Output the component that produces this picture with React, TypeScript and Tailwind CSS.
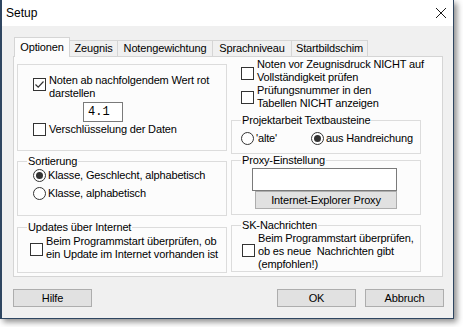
import React from "react";

function Box({ checked = false }: { checked?: boolean }) {
  return (
    <span className="flex h-[13px] w-[13px] shrink-0 items-center justify-center border border-[#333333] bg-white">
      {checked && (
        <svg width="11" height="11" viewBox="0 0 11 11">
          <path d="M1.5 5.5 L4.2 8.2 L9.5 2.5" fill="none" stroke="#333333" strokeWidth="1.2" />
        </svg>
      )}
    </span>
  );
}

function Radio({ checked = false }: { checked?: boolean }) {
  return (
    <span className="flex h-[13px] w-[13px] shrink-0 items-center justify-center rounded-full border border-[#333333] bg-white">
      {checked && <span className="h-[7px] w-[7px] rounded-full bg-[#333333]" />}
    </span>
  );
}

// group box: title sits on the top border
function Group({
  title,
  className,
  children,
}: {
  title: string;
  className: string;
  children: React.ReactNode;
}) {
  return (
    <div className={`shrink-0 border border-[#dcdcdc] ${className}`}>
      <div className="-mt-[7px] ml-[9px] h-[13px] w-fit bg-[#fcfcfc] px-[1px]">{title}</div>
      {children}
    </div>
  );
}

const tabs = [
  { label: "Optionen", w: "w-[56px]", active: true },
  { label: "Zeugnis", w: "w-[48px]" },
  { label: "Notengewichtung", w: "w-[95px]" },
  { label: "Sprachniveau", w: "w-[79px]" },
  { label: "Startbildschim", w: "w-[76px]" },
];

export default function App() {
  return (
    <div className="min-h-screen bg-white font-['Liberation_Sans',Arial,sans-serif] text-[11px] leading-[13px] tracking-[-0.15px] text-black">
      <div className="flex h-[319px] w-[454px] flex-col border-l-2 border-r border-b border-[#2f4661] bg-[#f0f0f0] shadow-[3px_3px_6px_rgba(0,0,0,0.45)]">
        {/* title bar */}
        <div className="flex h-[26px] shrink-0 items-center justify-between bg-white pl-[4px] pr-[5px]">
          <span className="text-[12px] tracking-normal">Setup</span>
          <svg width="12" height="12" viewBox="0 0 12 12" className="mr-[1px]">
            <path d="M1 1 L11 11 M11 1 L1 11" stroke="#1a1a1a" strokeWidth="1" />
          </svg>
        </div>

        {/* tabs */}
        <div className="ml-[11px] mt-[11px] flex w-[430px] shrink-0 flex-col">
          <div className="relative z-10 -mb-px flex h-[20px] items-end pl-[1px]">
            {tabs.map((t) =>
              t.active ? (
                <div
                  key={t.label}
                  className={`${t.w} flex h-[20px] items-center justify-center border-x border-t border-[#d5d5d5] bg-[#fcfcfc] pb-[1px]`}
                >
                  {t.label}
                </div>
              ) : (
                <div
                  key={t.label}
                  className={`${t.w} mb-px flex h-[16px] items-center justify-center border-t border-r border-[#d5d5d5] bg-[#f0f0f0]`}
                >
                  {t.label}
                </div>
              )
            )}
          </div>

          {/* panel */}
          <div className="flex h-[221px] gap-[4px] border border-[#d5d5d5] bg-[#fcfcfc] pl-[3px]">
            {/* left column */}
            <div className="flex w-[210px] shrink-0 flex-col">
              <div className="mt-[7px] h-[87px] shrink-0 border border-[#dcdcdc] pl-[15px] pt-[9px]">
                <div className="flex items-start gap-[3px]">
                  <span className="mt-[4px]">
                    <Box checked />
                  </span>
                  <span className="whitespace-nowrap">
                    Noten ab nachfolgendem Wert rot
                    <br />
                    darstellen
                  </span>
                </div>
                <div className="ml-[50px] mt-[2px] flex h-[20px] w-[40px] items-center border border-[#7a7a7a] bg-white pl-[4px] font-['Liberation_Mono',monospace] text-[12px] tracking-normal">
                  4.1
                </div>
                <div className="flex h-[15px] items-center gap-[3px]">
                  <Box />
                  <span>Verschlüsselung der Daten</span>
                </div>
              </div>

              <Group title="Sortierung" className="mt-[10px] h-[55px]">
                <div className="-mt-[2px] flex flex-col pl-[15px]">
                  <div className="flex h-[18px] items-center gap-[2px]">
                    <Radio checked />
                    <span>Klasse, Geschlecht, alphabetisch</span>
                  </div>
                  <div className="flex h-[18px] items-center gap-[2px]">
                    <Radio />
                    <span>Klasse, alphabetisch</span>
                  </div>
                </div>
              </Group>

              <Group title="Updates über Internet" className="mt-[11px] h-[46px]">
                <div className="flex items-center gap-[3px] pl-[12px] pt-[1px]">
                  <span className="mt-[3px]">
                    <Box />
                  </span>
                  <span className="whitespace-nowrap">
                    Beim Programmstart überprüfen, ob
                    <br />
                    ein Update im Internet vorhanden ist
                  </span>
                </div>
              </Group>
            </div>

            {/* right column */}
            <div className="flex w-[190px] shrink-0 flex-col">
              <div className="flex items-start gap-[3px] pl-[10px] pt-[1px]">
                <span className="mt-[9px]">
                  <Box />
                </span>
                <span className="whitespace-nowrap">
                  Noten vor Zeugnisdruck NICHT auf
                  <br />
                  Vollständigkeit prüfen
                </span>
              </div>
              <div className="flex items-start gap-[3px] pl-[10px]">
                <span className="mt-[7px]">
                  <Box />
                </span>
                <span className="whitespace-nowrap">
                  Prüfungsnummer in den
                  <br />
                  Tabellen NICHT anzeigen
                </span>
              </div>

              <Group title="Projektarbeit Textbausteine" className="mt-[10px] h-[34px]">
                <div className="mt-[2px] flex h-[18px] items-center pl-[9px]">
                  <div className="flex w-[70px] items-center gap-[2px]">
                    <Radio />
                    <span>'alte'</span>
                  </div>
                  <div className="flex items-center gap-[2px]">
                    <Radio checked />
                    <span>aus Handreichung</span>
                  </div>
                </div>
              </Group>

              <Group title="Proxy-Einstellung" className="mt-[6px] h-[55px]">
                <div className="ml-[20px] mt-[1px] h-[23px] w-[145px] border border-[#7a7a7a] bg-white" />
                <div className="ml-[23px] flex h-[18px] w-[142px] items-center justify-center border border-[#adadad] bg-[#e1e1e1]">
                  Internet-Explorer Proxy
                </div>
              </Group>

              <Group title="SK-Nachrichten" className="mt-[10px] h-[47px]">
                <div className="flex items-center gap-[3px] pl-[10px]">
                  <span className="-mt-[2px]">
                    <Box />
                  </span>
                  <span className="whitespace-pre">
                    {"Beim Programmstart überprüfen,\nob es neue  Nachrichten gibt\n(empfohlen!)"}
                  </span>
                </div>
              </Group>
            </div>
          </div>
        </div>

        {/* buttons */}
        <div className="mt-[12px] flex items-center pl-[11px] pr-[9px]">
          <button className="flex h-[18px] w-[79px] items-center justify-center border border-[#adadad] bg-[#e1e1e1]">
            Hilfe
          </button>
          <div className="ml-auto flex gap-[9px]">
            <button className="flex h-[18px] w-[79px] items-center justify-center border border-[#adadad] bg-[#e1e1e1]">
              OK
            </button>
            <button className="flex h-[18px] w-[79px] items-center justify-center border border-[#adadad] bg-[#e1e1e1]">
              Abbruch
            </button>
          </div>
        </div>
      </div>
    </div>
  );
}
